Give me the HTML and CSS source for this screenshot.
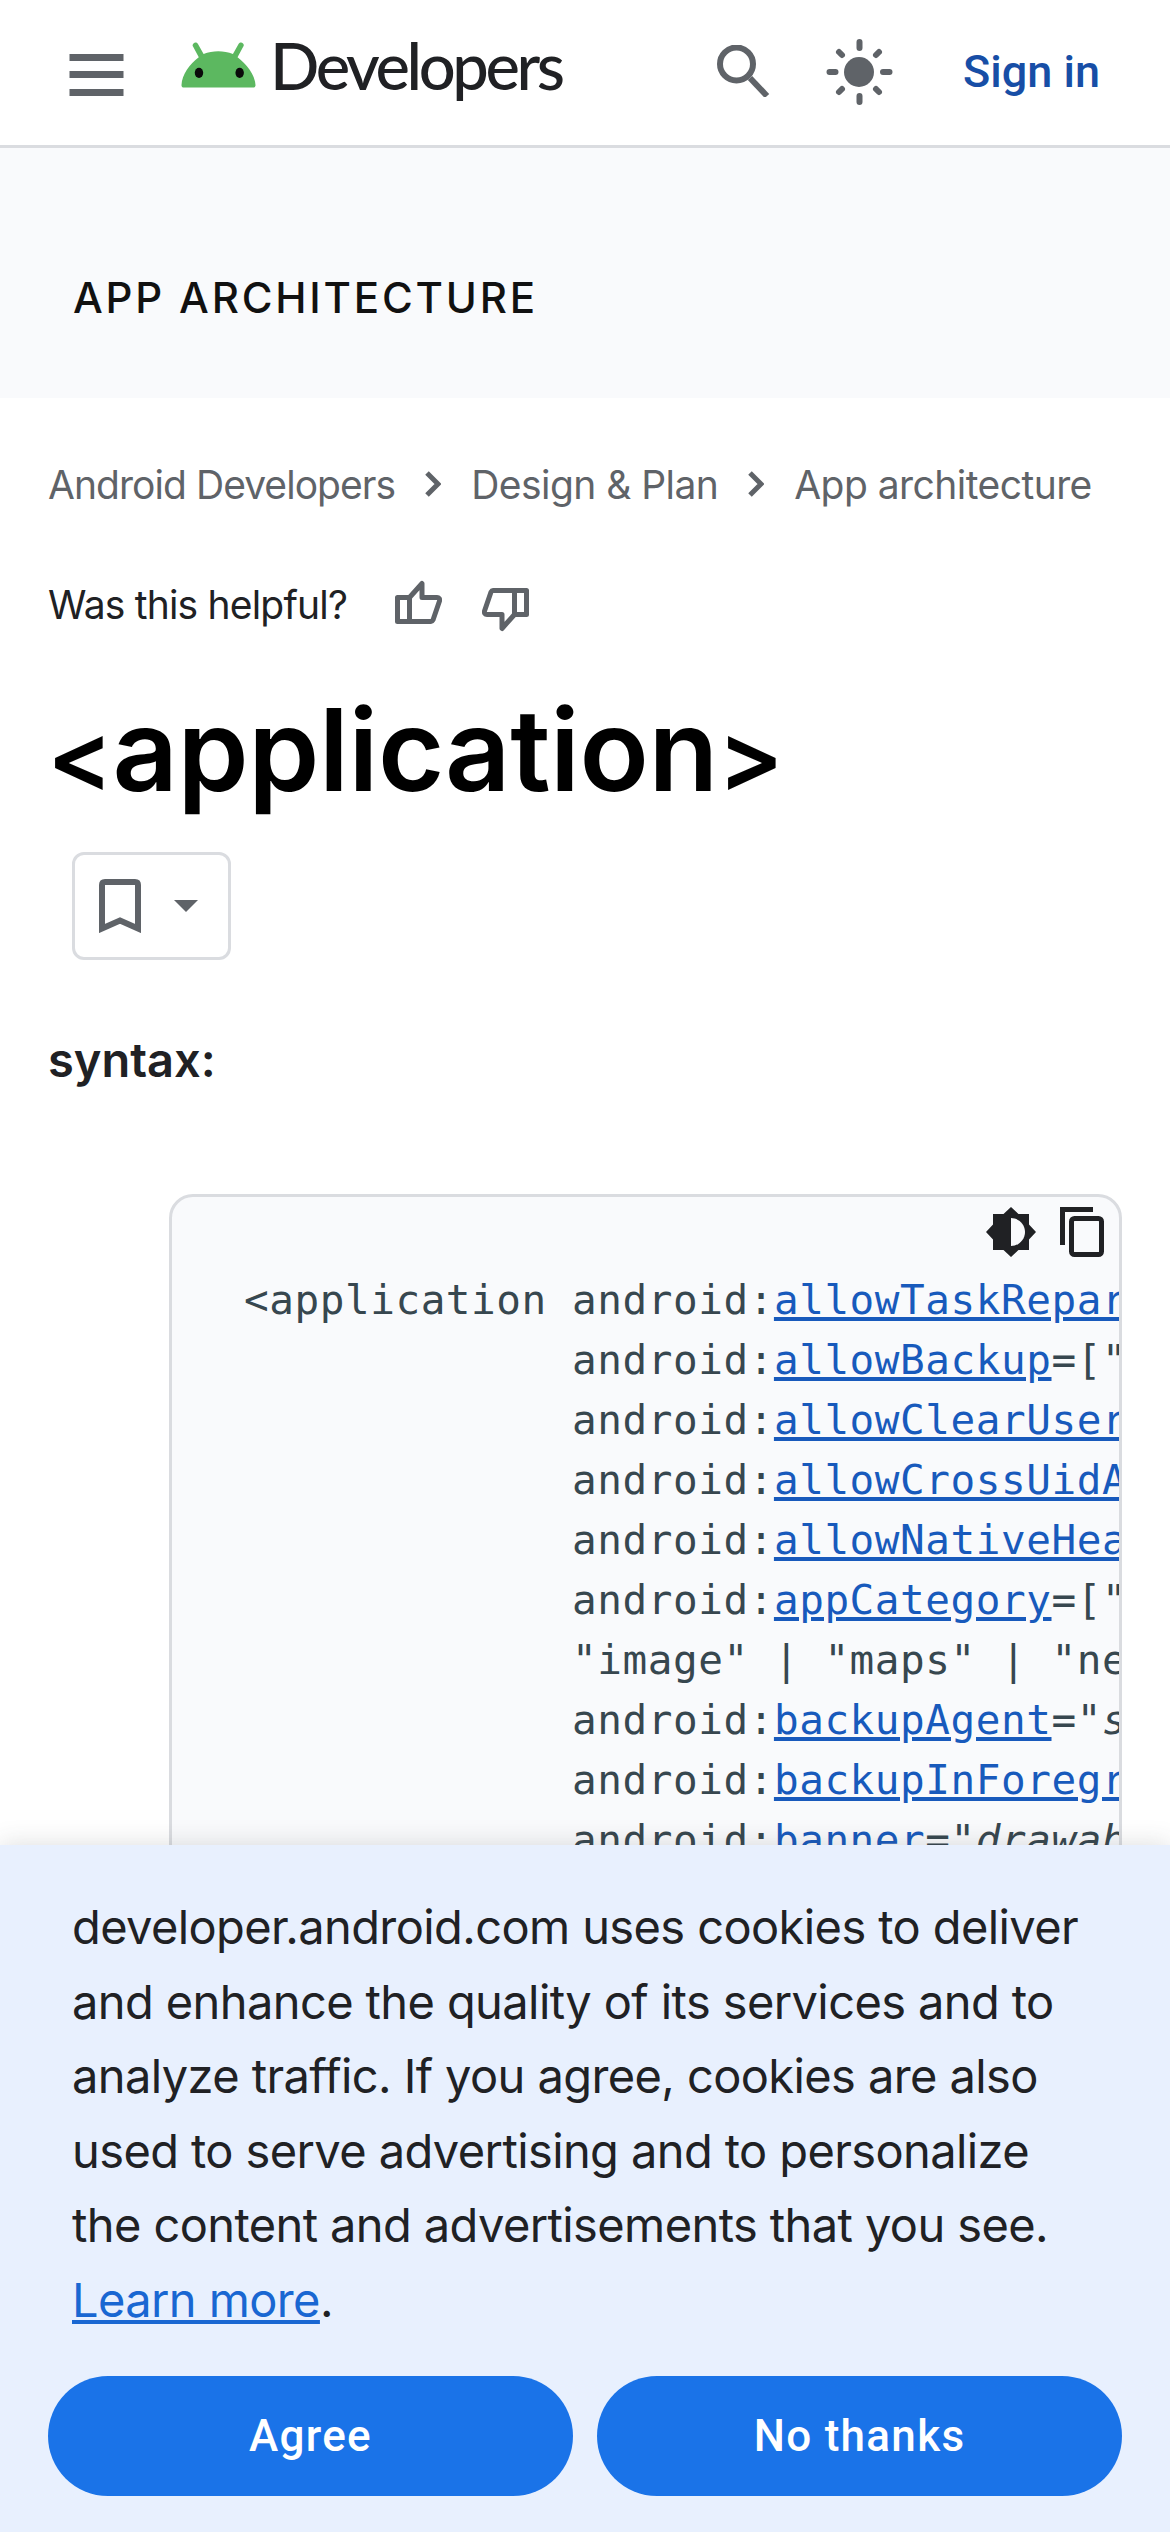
FILE: index.html
```html
<!DOCTYPE html>
<html lang="en">
<head>
<meta charset="utf-8">
<title>application</title>
<link rel="stylesheet" href="styles.css">
</head>
<body>
<header class="topbar">
  <svg class="menu" viewBox="0 0 54 42"><path d="M0 0h54v7H0zM0 17h54v7H0zM0 35h54v7H0z"/></svg>
  <svg class="droid" viewBox="0 0 78 50" preserveAspectRatio="none"><path d="M13 1.500c1.500-1.500 3.500-1 4.500.5l6 11c9.500-4 21-4 30.500 0l6-11c1-1.500 3-2 4.500-.5 1 1 1 2.300.3 3.500l-6 11.500C68 24 77 35 77.500 47c0 1.500-1 2.500-2.500 2.500H3C1.500 49.500.5 48.500.500 47 1 35 9 24 18.500 16.500l-6-11.500c-.7-1.200-.5-2.500.5-3.500z"/><ellipse class="eye" cx="18.700" cy="33.500" rx="4.400" ry="5.500"/><ellipse class="eye" cx="61" cy="33.500" rx="4.400" ry="5.500"/></svg>
  <span class="brand">Developers</span>
  <svg class="search" viewBox="0 0 53 52"><circle cx="19.500" cy="19" r="16.500"/><path d="M33 33l17 18"/></svg>
  <svg class="sun" viewBox="0 0 67 66"><ellipse class="core" cx="33" cy="33" rx="15" ry="15"/><path d="M33.500 3v6M33.500 57v6M3.500 33h6M57 33h6.500M13 13l3 3M53 13l-3 3M13 53l3-3M53 53l-3-3"/></svg>
  <a class="signin">Sign in</a>
</header>
<section class="band"><span>APP ARCHITECTURE</span></section>
<main class="content">
  <nav class="crumbs">
    <span class="root">Android Developers</span>
    <svg viewBox="0 0 16 26"><path d="M2 2l11 11L2 24"/></svg>
    <span>Design &amp; Plan</span>
    <svg viewBox="0 0 16 26"><path d="M2 2l11 11L2 24"/></svg>
    <span>App architecture</span>
  </nav>
  <div class="helpful">
    <span>Was this helpful?</span>
    <svg class="thumb" viewBox="0 0 47 44"><path d="M2.500 17.500h12v24h-12zM14.500 17.500L27 3.500v14h15c2 0 3 1.500 2.500 3.500L38 40c-.5 1-1 1.500-2 1.500H14.500"/></svg>
    <svg class="thumb down" viewBox="0 0 47 44"><path d="M2.500 17.500h12v24h-12zM14.500 17.500L27 3.500v14h15c2 0 3 1.500 2.500 3.500L38 40c-.5 1-1 1.500-2 1.500H14.500"/></svg>
  </div>
  <h1><span class="angle">&lt;</span>application<span class="angle">&gt;</span></h1>
  <div class="bookmark">
    <svg class="mark" viewBox="0 0 42 54"><path d="M3 49.500V6c0-2 1-3 3-3h30c2 0 3 1 3 3v43.500L21 41.500z"/></svg>
    <svg class="caret" viewBox="0 0 24 12"><path d="M0 0h24L12 12z"/></svg>
  </div>
  <p class="syntax">syntax:</p>
  <div class="code">
    <div class="tools">
      <svg class="contrast" viewBox="0 0 50 50"><path d="M25 0l7.500 7H43v10.500l7 7.500-7 7.500V43H32.500L25 50l-7.500-7H7V32.500L0 25l7-7.500V7h10.500z"/><path class="half" d="M25 11c7.700 0 14 6.300 14 14s-6.300 14-14 14z"/></svg>
      <svg class="copy" viewBox="0 0 44 50"><path d="M33 2.500H2.500V38"/><rect x="11.500" y="11.500" width="30" height="36" rx="3"/></svg>
    </div>
<pre>&lt;application android:<a>allowTaskReparenting</a>=["true" | "false"]
             android:<a>allowBackup</a>=["true" | "false"]
             android:<a>allowClearUserData</a>=["true" | "false"]
             android:<a>allowCrossUidActivitySwitch</a>=["true"]
             android:<a>allowNativeHeapPointerTagging</a>=["true"]
             android:<a>appCategory</a>=["accessibility" | "audio" |
             "image" | "maps" | "news" | "productivity"]
             android:<a>backupAgent</a>="<i>string</i>"
             android:<a>backupInForeground</a>=["true" | "false"]
             android:<a>banner</a>="<i>drawable resource</i>"</pre>
  </div>
</main>
<aside class="cookies">
  <p>developer.android.com uses cookies to deliver and enhance the quality of its services and to analyze traffic. If you agree, cookies are also used to serve advertising and to personalize the content and advertisements that you see. <a>Learn more</a>.</p>
  <div class="actions">
    <button>Agree</button>
    <button>No thanks</button>
  </div>
</aside>
</body>
</html>
```
FILE: styles.css
```css
* { box-sizing: border-box; }
html, body { margin: 0; padding: 0; }
body {
  width: 1170px;
  height: 2532px;
  overflow: hidden;
  position: relative;
  background: #fff;
  font-family: "Inter", "Roboto", sans-serif;
  color: #202124;
}
.topbar {
  height: 148px;
  border-bottom: 3px solid #dadce0;
  display: flex;
  align-items: flex-start;
  padding: 0 70px 0 69px;
}
.menu { width: 55px; height: 42px; margin-top: 54px; fill: #5f6368; }
.droid { width: 75px; height: 46px; margin: 42px 0 0 57px; fill: #5cb860; }
.eye { fill: #0a0a0a; }
.brand {
  margin: 28px 0 0 14px;
  font-family: "Lato", "Inter", sans-serif;
  font-size: 65px;
  line-height: 75px;
  letter-spacing: -3.350px;
  font-weight: 500;
  color: #202124;
}
.search { width: 53px; height: 52px; margin: 45px 0 0 auto; fill: none; stroke: #5f6368; stroke-width: 6px; }
.sun { width: 67px; height: 66px; margin: 39px 0 0 56px; stroke: #5f6368; stroke-width: 6px; stroke-linecap: round; }
.core { fill: #5f6368; stroke: none; }
.signin {
  margin: 47px 0 0 70px;
  font-family: "Roboto", sans-serif;
  font-size: 45px;
  line-height: 50px;
  font-weight: 500;
  color: #174ea6;
}
.band {
  height: 250px;
  background: #f9fafc;
  padding: 121px 0 0 73px;
  font-size: 42px;
  line-height: 58px;
  font-weight: 500;
  letter-spacing: 2.800px;
  color: #111;
}
.content { padding: 0 48px; }
.crumbs {
  display: flex;
  align-items: center;
  gap: 30px;
  margin-top: 60px;
  height: 52px;
  font-size: 39px;
  letter-spacing: -0.550px;
  color: #5f6368;
  white-space: nowrap;
}
.crumbs .root { letter-spacing: -0.950px; }
.crumbs svg { width: 16px; height: 26px; fill: none; stroke: #5f6368; stroke-width: 5px; }
.helpful {
  display: flex;
  align-items: center;
  margin-top: 68px;
  height: 52px;
  font-size: 39px;
  letter-spacing: -0.800px;
  color: #202124;
}
.thumb { width: 47px; height: 44px; margin: 0 0 4px 48px; fill: none; stroke: #5f6368; stroke-width: 5px; stroke-linejoin: round; }
.thumb.down { margin: 12px 0 0 40px; transform: rotate(180deg); }
h1 {
  margin: 50px 0 0 -1px;
  height: 140px;
  font-size: 114px;
  line-height: 140px;
  font-weight: 600;
  letter-spacing: -0.400px;
  color: #000;
}
.angle { font-size: 98px; line-height: 0; }
.bookmark {
  margin: 32px 0 0 24px;
  width: 159px;
  height: 108px;
  border: 3px solid #dadce0;
  border-radius: 12px;
  display: flex;
  align-items: center;
  padding-left: 24px;
}
.mark { width: 42px; height: 54px; fill: none; stroke: #5f6368; stroke-width: 6px; }
.caret { width: 24px; height: 12px; margin-left: 33px; fill: #5f6368; }
.syntax {
  margin: 71px 0 0;
  font-size: 47px;
  line-height: 58px;
  font-weight: 600;
  letter-spacing: 0;
  color: #202124;
}
.code {
  margin: 105px 0 0 121px;
  width: 953px;
  height: 700px;
  border: 3px solid #dadce0;
  border-radius: 24px;
  background: #f9fafc;
  overflow: hidden;
}
.tools {
  display: flex;
  justify-content: flex-end;
  align-items: flex-start;
  gap: 24px;
  height: 73px;
  padding: 10px 15px 0 0;
}
.contrast { width: 50px; height: 50px; fill: #202124; }
.half { fill: #f9fafc; }
.copy { width: 44px; height: 50px; fill: none; stroke: #202124; stroke-width: 5px; }
pre {
  margin: 0;
  padding-left: 72px;
  font-family: "DejaVu Sans Mono", "Liberation Mono", monospace;
  font-size: 41px;
  line-height: 60px;
  letter-spacing: 0.550px;
  color: #37474f;
  white-space: pre;
}
pre a { color: #185abc; text-decoration: underline; }
.cookies {
  position: absolute;
  left: 0;
  right: 0;
  bottom: 0;
  height: 687px;
  background: #e8f0fe;
  box-shadow: 0 0 24px rgba(60, 64, 67, 0.18);
  padding: 45px 48px 0;
}
.cookies p {
  margin: 0;
  padding: 0 24px;
  font-size: 47px;
  line-height: 74.500px;
  letter-spacing: -0.600px;
  color: #202124;
}
.cookies p a { color: #1967d2; text-decoration: underline; }
.actions { display: flex; gap: 24px; margin-top: 39px; }
button {
  flex: 1;
  height: 120px;
  border: 0;
  border-radius: 60px;
  background: #1a73e8;
  color: #fff;
  font-family: "Roboto", sans-serif;
  font-size: 44px;
  font-weight: 500;
  letter-spacing: 1.300px;
}
```
